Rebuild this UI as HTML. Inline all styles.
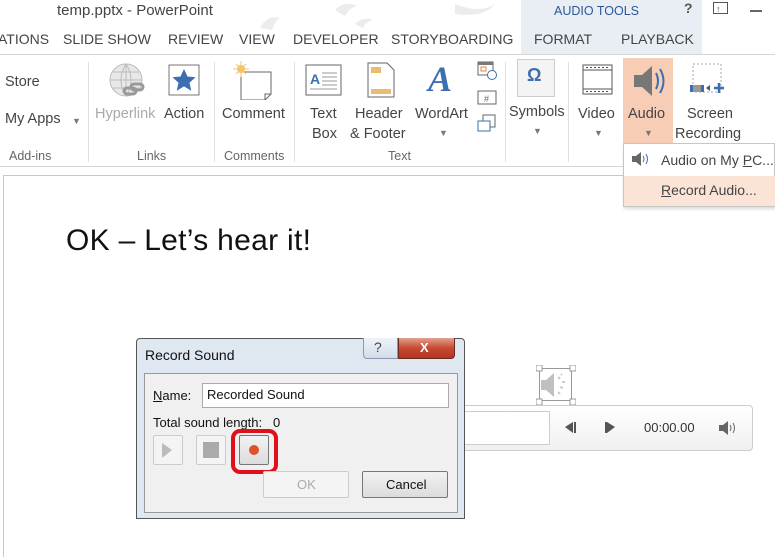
<!DOCTYPE html>
<html><head><meta charset="utf-8"><style>
*{margin:0;padding:0;box-sizing:border-box}
body{width:775px;height:557px;overflow:hidden;background:#fff;font-family:"Liberation Sans",sans-serif;position:relative;color:#444}
.a{position:absolute;white-space:nowrap}
.tab{font-size:14px;color:#444;top:31px}
.lbl{font-size:14.5px;color:#444}
.grp{font-size:12.5px;color:#666;top:149px}
.sep{position:absolute;top:62px;width:1px;height:100px;background:#e1e1e1}
.car{font-size:9px;color:#777}
</style></head><body>
<!-- title bar -->
<svg class="a" style="left:240px;top:0" width="340" height="30"><g fill="#ececec"><path d="M20 28 q8-14 20-10 q-6 4-8 12z"/><path d="M95 10 q10-10 22-4 q-8 2-12 10z"/><path d="M115 24 q8-8 18-4 q-8 2-10 8z"/><path d="M215 4 q25 10 40 0 q-10 14-40 10z"/></g></svg>
<div class="a" style="left:57px;top:2px;font-size:15px;color:#444">temp.pptx - PowerPoint</div>
<div class="a" style="left:521px;top:0;width:181px;height:54px;background:#e9eef5"></div>
<div class="a" style="left:554px;top:4px;font-size:12.5px;color:#2b579a">AUDIO TOOLS</div>
<div class="a" style="left:684px;top:0;font-size:14px;color:#555;font-weight:bold">?</div>
<div class="a" style="left:713px;top:2px;width:15px;height:12px;border:1px solid #555"></div>
<div class="a" style="left:716px;top:4px;font-size:9px;color:#555">↑</div>
<div class="a" style="left:750px;top:10px;width:12px;height:2px;background:#666"></div>
<!-- tabs -->
<div class="a tab" style="left:-2px">ATIONS</div>
<div class="a tab" style="left:63px">SLIDE SHOW</div>
<div class="a tab" style="left:168px">REVIEW</div>
<div class="a tab" style="left:239px">VIEW</div>
<div class="a tab" style="left:293px">DEVELOPER</div>
<div class="a tab" style="left:391px">STORYBOARDING</div>
<div class="a tab" style="left:534px">FORMAT</div>
<div class="a tab" style="left:621px">PLAYBACK</div>
<div class="a" style="left:0;top:54px;width:775px;height:1px;background:#d5d5d5"></div>
<!-- ribbon -->
<div class="a lbl" style="left:5px;top:74px">Store</div>
<div class="a lbl" style="left:5px;top:111px">My Apps</div><div class="a car" style="left:72px;top:116px">▼</div>
<div class="a grp" style="left:9px">Add-ins</div>
<div class="sep" style="left:88px"></div>
<svg class="a" style="left:107px;top:60px" width="42" height="42"><circle cx="19" cy="20" r="16" fill="#e8e8e8" stroke="#bbb"/><path d="M3 20h32M19 4v32M19 4q-10 16 0 32M19 4q10 16 0 32M6 12h26M6 28h26" stroke="#bbb" fill="none"/><rect x="17" y="28" width="12" height="6" rx="3" fill="none" stroke="#999" stroke-width="3"/><rect x="24" y="24" width="12" height="6" rx="3" fill="none" stroke="#999" stroke-width="3"/></svg>
<div class="a lbl" style="left:95px;top:106px;color:#aaa">Hyperlink</div>
<svg class="a" style="left:167px;top:63px" width="34" height="34"><rect x="2" y="2" width="30" height="30" fill="none" stroke="#777"/><path d="M17 6l3.5 7.5 8 .8-6 5.4 1.8 8-7.3-4.3-7.3 4.3 1.8-8-6-5.4 8-.8z" fill="#3b6fb0"/></svg>
<div class="a lbl" style="left:164px;top:106px">Action</div>
<div class="sep" style="left:214px"></div>
<svg class="a" style="left:233px;top:60px" width="42" height="40"><path d="M8 12h30v22l-6 6H8z" fill="#fff" stroke="#666"/><path d="M32 40v-6h6" fill="none" stroke="#666"/><circle cx="8" cy="9" r="4" fill="#f4c56b"/><path d="M8 1v16M0 9h16M3 4l10 10M13 4L3 14" stroke="#f4c56b"/></svg>
<div class="a lbl" style="left:222px;top:106px">Comment</div>
<div class="grp" style="left:224px;position:absolute">Comments</div>
<div class="a grp" style="left:137px">Links</div>
<div class="sep" style="left:294px"></div>
<svg class="a" style="left:305px;top:64px" width="38" height="32"><rect x="1" y="1" width="35" height="30" fill="#fff" stroke="#666"/><text x="5" y="20" font-size="14" fill="#3b6fb0" font-family="Liberation Sans" font-weight="bold">A</text><path d="M17 9h15M17 13h15M17 17h15M17 21h15M5 25h27" stroke="#999"/></svg>
<div class="a lbl" style="left:310px;top:106px">Text</div><div class="a lbl" style="left:312px;top:126px">Box</div>
<svg class="a" style="left:367px;top:62px" width="28" height="36"><path d="M1 1h19l7 7v27H1z" fill="#fff" stroke="#666"/><rect x="4" y="5" width="10" height="6" fill="#e8be6e"/><rect x="4" y="27" width="20" height="5" fill="#e8be6e"/></svg>
<div class="a lbl" style="left:355px;top:106px">Header</div><div class="a lbl" style="left:350px;top:126px">&amp; Footer</div>
<div class="a" style="left:428px;top:58px;font-size:36px;color:#3b6fb0;font-style:italic;font-weight:bold;font-family:'Liberation Serif',serif">A</div>
<div class="a lbl" style="left:415px;top:106px">WordArt</div><div class="a car" style="left:439px;top:128px">▼</div>
<svg class="a" style="left:477px;top:60px" width="22" height="78"><rect x="1" y="2" width="15" height="13" fill="#fff" stroke="#666"/><rect x="1" y="2" width="15" height="3" fill="#777"/><rect x="4" y="7" width="5" height="4" fill="none" stroke="#e08040"/><circle cx="15" cy="15" r="4.5" fill="#fff" stroke="#3b6fb0"/><rect x="1" y="31" width="18" height="13" fill="#fff" stroke="#666"/><text x="7" y="42" font-size="9" fill="#3b6fb0" font-family="Liberation Sans">#</text><rect x="6" y="55" width="12" height="12" fill="#fff" stroke="#666"/><rect x="1" y="61" width="12" height="10" fill="#fff" stroke="#3b6fb0"/></svg>
<div class="a grp" style="left:388px">Text</div>
<div class="sep" style="left:505px"></div>
<div class="a" style="left:517px;top:59px;width:38px;height:38px;border:1px solid #ccc;background:#f4f4f4"></div>
<div class="a" style="left:527px;top:65px;font-size:18px;color:#3b6fb0;font-weight:bold">Ω</div>
<div class="a lbl" style="left:509px;top:104px">Symbols</div><div class="a car" style="left:533px;top:126px">▼</div>
<div class="sep" style="left:568px"></div>
<svg class="a" style="left:582px;top:64px" width="32" height="32"><rect x="1" y="1" width="29" height="29" fill="#fff" stroke="#555"/><path d="M1 6h29M1 25h29" stroke="#555"/><path d="M4 3.5h24M4 27.5h24" stroke="#555" stroke-dasharray="2 2"/></svg>
<div class="a lbl" style="left:578px;top:106px">Video</div><div class="a car" style="left:594px;top:128px">▼</div>
<div class="a" style="left:623px;top:58px;width:50px;height:85px;background:#f7cdb5"></div>
<svg class="a" style="left:630px;top:63px" width="40" height="36"><path d="M4 12h8l10-9v30l-10-9H4z" fill="#777"/><path d="M26 10q4 8 0 16M30 6q7 12 0 24" stroke="#3b6fb0" stroke-width="2" fill="none"/></svg>
<div class="a lbl" style="left:628px;top:106px">Audio</div><div class="a car" style="left:644px;top:128px">▼</div>
<svg class="a" style="left:690px;top:63px" width="40" height="34"><rect x="3" y="1" width="28" height="28" fill="none" stroke="#aaa" stroke-dasharray="2 2"/><rect x="0" y="22" width="14" height="7" fill="#3b6fb0"/><rect x="3" y="22" width="8" height="7" fill="#999"/><path d="M16 25l4-3v6z" fill="#555"/><path d="M24 25h10M29 20v10" stroke="#3b6fb0" stroke-width="2.5"/></svg>
<div class="a lbl" style="left:687px;top:106px">Screen</div><div class="a lbl" style="left:675px;top:126px">Recording</div>
<div class="a" style="left:0;top:166px;width:775px;height:1px;background:#d5d5d5"></div>
<!-- slide -->
<div class="a" style="left:3px;top:175px;width:772px;height:382px;border-left:1px solid #c8c8c8;border-top:1px solid #c8c8c8"></div>
<div class="a" style="left:66px;top:224px;font-size:30px;color:#111;font-family:'Liberation Sans',sans-serif;letter-spacing:0.3px">OK – Let’s hear it!</div>
<!-- audio icon -->
<div class="a" style="left:539px;top:368px;width:33px;height:33px;border:1px solid #999"></div>
<svg class="a" style="left:536px;top:365px" width="40" height="40"><g fill="#fff" stroke="#999"><rect x="0" y="0" width="6" height="6"/><rect x="34" y="0" width="6" height="6"/><rect x="0" y="34" width="6" height="6"/><rect x="34" y="34" width="6" height="6"/></g><path d="M5 15h5l8-7v24l-8-7H5z" fill="#c0c0c0"/><path d="M22 12l2 2M26 17h3M24 22l3 1M22 27l2 2M25 9l1 1" stroke="#ccc" stroke-width="2"/></svg>
<!-- player bar -->
<div class="a" style="left:460px;top:405px;width:293px;height:46px;border:1px solid #ccc;border-radius:4px;background:linear-gradient(#fff,#f0f0f0)"></div>
<div class="a" style="left:460px;top:411px;width:90px;height:34px;border:1px solid #ccc;background:#fff"></div>
<svg class="a" style="left:565px;top:421px" width="50" height="14"><path d="M0 6l8-5v11z" fill="#555"/><rect x="9" y="1" width="2" height="11" fill="#555"/><rect x="40" y="1" width="2" height="11" fill="#555"/><path d="M42 1l8 5-8 6z" fill="#555"/></svg>
<div class="a" style="left:644px;top:420px;font-size:13px;color:#333">00:00.00</div>
<svg class="a" style="left:718px;top:420px" width="20" height="16"><path d="M1 5h4l5-4v14l-5-4H1z" fill="#666"/><path d="M12 5q2 3 0 6M15 3q3 5 0 10" stroke="#666" fill="none"/></svg>
<!-- menu -->
<div class="a" style="left:623px;top:143px;width:152px;height:64px;background:#fff;border:1px solid #c6c6c6;box-shadow:1px 2px 3px rgba(0,0,0,.15)"></div>
<svg class="a" style="left:631px;top:152px" width="20" height="14"><path d="M1 4h4l5-4v14l-5-4H1z" fill="#666"/><path d="M12 4q2 3 0 6M15 2q3 5 0 10" stroke="#3b6fb0" fill="none"/></svg>
<div class="a" style="left:661px;top:152px;font-size:14px;color:#444">Audio on My <u>P</u>C...</div>
<div class="a" style="left:624px;top:176px;width:151px;height:30px;background:#fbe3d6"></div>
<div class="a" style="left:661px;top:182px;font-size:14px;color:#444"><u>R</u>ecord Audio...</div>
<!-- dialog -->
<div class="a" style="left:136px;top:338px;width:329px;height:181px;background:#dfe7f1;border:1px solid #555;border-radius:4px 4px 0 0"></div>
<div class="a" style="left:145px;top:347px;font-size:14px;color:#111">Record Sound</div>
<div class="a" style="left:363px;top:338px;width:35px;height:21px;border:1px solid #8a9ab0;border-top:none;border-radius:0 0 0 4px;background:linear-gradient(#eef3f9,#d3dde9)"></div>
<div class="a" style="left:374px;top:339px;font-size:14px;color:#444">?</div>
<div class="a" style="left:398px;top:338px;width:57px;height:21px;border:1px solid #6b2a20;border-top:none;border-radius:0 0 4px 0;background:linear-gradient(#e3a190,#c74a33 50%,#b53420)"></div>
<div class="a" style="left:420px;top:340px;font-size:13px;color:#fff;font-weight:bold">X</div>
<div class="a" style="left:144px;top:373px;width:314px;height:140px;background:#f0f0f0;border:1px solid #999"></div>
<div class="a" style="left:153px;top:388px;font-size:13px;color:#111"><u>N</u>ame:</div>
<div class="a" style="left:202px;top:383px;width:247px;height:25px;background:#fff;border:1px solid #aaa"></div>
<div class="a" style="left:207px;top:387px;font-size:13px;color:#111">Recorded Sound</div>
<div class="a" style="left:153px;top:415px;font-size:13px;color:#111">Total sound length:&nbsp;&nbsp; 0</div>
<div class="a" style="left:153px;top:435px;width:30px;height:30px;border:1px solid #ccc;border-radius:2px;background:#f4f4f4"></div>
<svg class="a" style="left:162px;top:443px" width="12" height="16"><path d="M0 0l10 7-10 8z" fill="#bbb"/></svg>
<div class="a" style="left:196px;top:435px;width:30px;height:30px;border:1px solid #ccc;border-radius:2px;background:#f4f4f4"></div>
<div class="a" style="left:203px;top:442px;width:16px;height:16px;background:#aaa"></div>
<div class="a" style="left:231px;top:429px;width:47px;height:45px;border:4px solid #e0101a;border-radius:9px"></div>
<div class="a" style="left:239px;top:435px;width:30px;height:30px;border:1px solid #777;border-radius:2px;background:linear-gradient(#f2f2f2,#dcdcdc)"></div>
<div class="a" style="left:249px;top:445px;width:10px;height:10px;border-radius:50%;background:#e05030"></div>
<div class="a" style="left:263px;top:471px;width:86px;height:27px;border:1px solid #ccc;border-radius:2px;background:#f4f4f4"></div>
<div class="a" style="left:297px;top:477px;font-size:13px;color:#aaa">OK</div>
<div class="a" style="left:362px;top:471px;width:86px;height:27px;border:1px solid #777;border-radius:2px;background:linear-gradient(#f2f2f2,#dcdcdc)"></div>
<div class="a" style="left:386px;top:477px;font-size:13px;color:#111">Cancel</div>
</body></html>
